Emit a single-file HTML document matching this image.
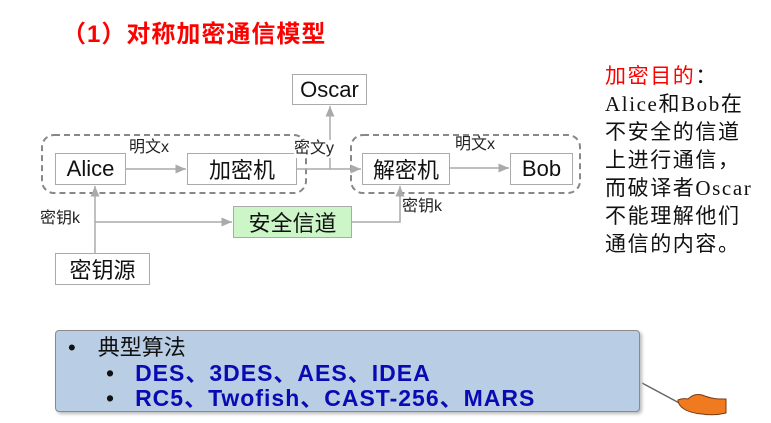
<!DOCTYPE html>
<html><head><meta charset="utf-8"><style>
*{margin:0;padding:0;box-sizing:border-box}
body{width:771px;height:423px;background:#fff;position:relative;overflow:hidden;font-family:"Liberation Sans","Noto Sans CJK SC",sans-serif}
.a{position:absolute;white-space:nowrap}
.box{position:absolute;border:1.5px solid #aaa;background:#fff;font-size:22px;color:#111;display:flex;align-items:center;justify-content:center}
.lbl{position:absolute;font-size:16px;color:#222;white-space:nowrap;background:#fff;line-height:18px}
</style></head><body>
<div class="a" style="left:62px;top:14px;font-size:24px;font-weight:bold;color:#f00;letter-spacing:1px">（1）对称加密通信模型</div>

<svg class="a" style="left:0;top:0" width="771" height="423">
<defs><marker id="ar" markerWidth="8" markerHeight="8" refX="7" refY="4" orient="auto"><path d="M0,1 L7,4 L0,7 z" fill="#aaa"/></marker></defs>
<rect x="42" y="135" width="264" height="58" rx="12" fill="none" stroke="#888" stroke-width="2" stroke-dasharray="6,4"/>
<rect x="351" y="135" width="229" height="58" rx="12" fill="none" stroke="#888" stroke-width="2" stroke-dasharray="6,4"/>
<g stroke="#aaa" stroke-width="1.5" fill="none">
<line x1="125" y1="169" x2="186" y2="169" marker-end="url(#ar)"/>
<line x1="297" y1="169" x2="361" y2="169" marker-end="url(#ar)"/>
<line x1="330" y1="169" x2="330" y2="106" marker-end="url(#ar)"/>
<line x1="450" y1="168" x2="509" y2="168" marker-end="url(#ar)"/>
<line x1="95" y1="253" x2="95" y2="186" marker-end="url(#ar)"/>
<line x1="95" y1="222" x2="232" y2="222" marker-end="url(#ar)"/>
<polyline points="352,222 400,222 400,186" marker-end="url(#ar)"/>
</g>
<line x1="642" y1="383" x2="683" y2="405" stroke="#666" stroke-width="1.5"/>
<path d="M678,400 q4,-2 10,-1 q6,-6 14,-4 q10,4 18,4 l6,0 v14 q-12,3 -24,1 q-12,-1 -18,-5 q-6,-4 -6,-9z" fill="#f07a20" stroke="#7a3a10" stroke-width="1"/>
</svg>

<div class="box" style="left:292px;top:74px;width:75px;height:31px">Oscar</div>
<div class="box" style="left:55px;top:153px;width:71px;height:32px">Alice</div>
<div class="box" style="left:187px;top:153px;width:110px;height:32px">加密机</div>
<div class="box" style="left:362px;top:153px;width:88px;height:32px">解密机</div>
<div class="box" style="left:510px;top:153px;width:63px;height:32px">Bob</div>
<div class="box" style="left:233px;top:206px;width:119px;height:32px;background:#ccf5c8">安全信道</div>
<div class="box" style="left:55px;top:253px;width:95px;height:32px">密钥源</div>

<div class="lbl" style="left:129px;top:139px">明文x</div>
<div class="lbl" style="left:294px;top:140px">密文y</div>
<div class="lbl" style="left:455px;top:136px">明文x</div>
<div class="lbl" style="left:40px;top:210px">密钥k</div>
<div class="lbl" style="left:402px;top:198px">密钥k</div>

<div class="a" style="left:605px;top:62px;font-size:21px;line-height:28px;letter-spacing:1.6px;color:#111;font-family:'Liberation Serif','Noto Sans CJK SC',serif">
<span style="color:#f00">加密目的</span>：<br>Alice和Bob在<br>不安全的信道<br>上进行通信，<br>而破译者Oscar<br>不能理解他们<br>通信的内容。</div>

<div class="a" style="left:55px;top:330px;width:585px;height:82px;background:#b9cde5;border:1.5px solid #8a8a8a;border-radius:4px;box-shadow:2px 2px 3px #bbb"></div>
<div class="a" style="left:68px;top:335px;font-size:22px;color:#111;line-height:26px">•<span style="display:inline-block;width:22px"></span>典型算法</div>
<div class="a" style="left:106px;top:360px;font-size:23px;font-weight:bold;color:#0a0ab4;line-height:26px;letter-spacing:1px"><span style="color:#111;font-weight:normal">•</span><span style="display:inline-block;width:20px"></span>DES、3DES、AES、IDEA</div>
<div class="a" style="left:106px;top:385px;font-size:23px;font-weight:bold;color:#0a0ab4;line-height:26px;letter-spacing:1px"><span style="color:#111;font-weight:normal">•</span><span style="display:inline-block;width:20px"></span>RC5、Twofish、CAST-256、MARS</div>
</body></html>
